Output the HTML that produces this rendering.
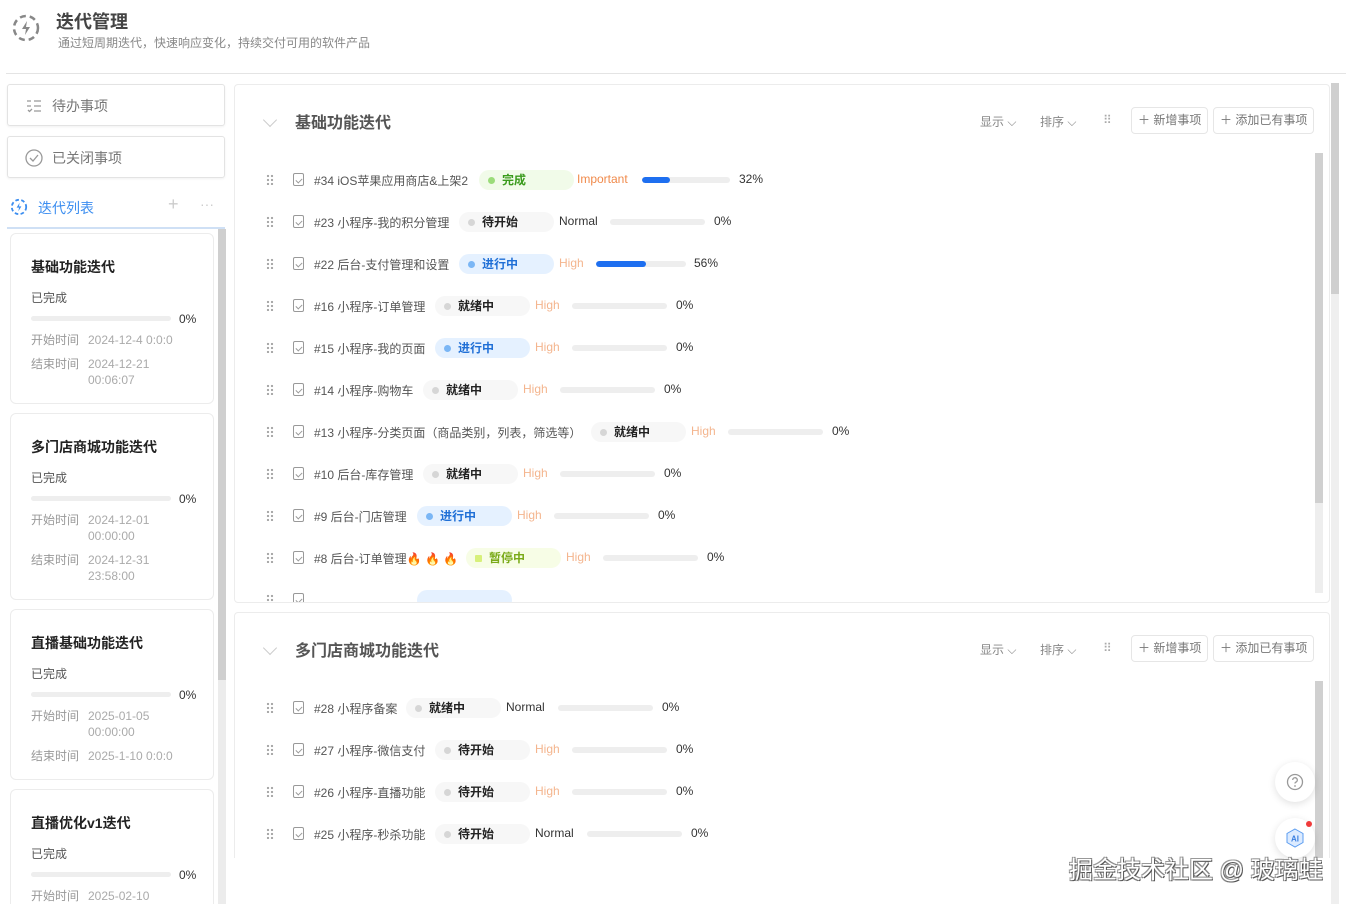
<!DOCTYPE html>
<html><head><meta charset="utf-8"><style>
*{margin:0;padding:0;box-sizing:border-box}
html,body{width:1354px;height:904px;overflow:hidden}
body{background:#fff;font-family:"Liberation Sans","Noto Sans CJK SC",sans-serif;color:#333;position:relative}
.a{position:absolute}
.btn{position:absolute;left:7px;width:218px;height:42px;border:1px solid #e3e3e3;border-radius:3px;box-shadow:0 1px 2px rgba(0,0,0,.06);font-size:14px;color:#777;}
.card{position:absolute;left:10px;width:204px;border:1px solid #ececec;border-radius:6px;background:#fff}
.card .t{position:absolute;left:20px;top:23px;font-size:14px;font-weight:bold;color:#222}
.card .s{position:absolute;left:20px;font-size:12px;color:#555}
.card .bar{position:absolute;left:20px;width:140px;height:5px;border-radius:3px;background:#eee}
.card .p{position:absolute;left:168px;font-size:12px;color:#333}
.card .l{position:absolute;left:20px;font-size:12px;color:#999;line-height:16px}
.card .v{position:absolute;left:77px;font-size:12px;color:#aaa;line-height:16px}
.panel{position:absolute;left:234px;width:1096px;border:1px solid #ececec;border-radius:4px;overflow:hidden;background:#fff}
.ph{position:absolute;top:24px;left:60px;font-size:16px;font-weight:bold;color:#555}
.chev{position:absolute;left:30px;top:30px;width:10px;height:10px;border-right:1.5px solid #ccc;border-bottom:1.5px solid #ccc;transform:rotate(45deg)}
.tool{position:absolute;top:28px;font-size:12px;color:#888}
.ob{position:absolute;top:22px;height:27px;border:1px solid #e6e6e6;border-radius:4px;font-size:12px;color:#777;line-height:25px;padding:0 6px}
.row{position:absolute;left:0;width:1060px;height:42px;font-size:12px}
.drag{position:absolute;left:31px;top:15px;width:8px;height:11px;background:radial-gradient(circle,#aaa 1.1px,transparent 1.3px) 0 0/4px 4px}
.ck{position:absolute;left:58px;top:14px;width:11px;height:13px;border:1.3px solid #999;border-radius:2px}
.ck:after{content:"";position:absolute;left:2.5px;top:3px;width:3px;height:5px;border-right:1.2px solid #999;border-bottom:1.2px solid #999;transform:rotate(45deg)}
.nm{position:absolute;left:79px;top:13px;color:#555;white-space:nowrap}
.pill{position:absolute;top:11px;width:95px;height:20px;border-radius:10px;font-size:12px;line-height:20px;font-weight:600}
.pill i{position:absolute;left:9px;top:7px;width:7px;height:7px;border-radius:50%}
.pill span{position:absolute;left:23px}
.g{background:#f1fbe9;color:#3a9b1c}.g i{background:#9bdc7a}
.w{background:#f7f7f7;color:#222}.w i{background:#d6d6d6}
.b{background:#e5f1ff;color:#1f6fd6}.b i{background:#7ab6f5}
.y{background:#f7fde6;color:#7aaa19}.y i{background:#d7f07a;border-radius:1px}
.pr{position:absolute;top:13px;color:#f4b58e}
.bar{position:absolute;top:18px;height:6px;border-radius:3px;background:#eee;overflow:hidden}
.bar b{display:block;height:6px;background:#1e6ff0;border-radius:3px}
.pc{position:absolute;top:13px;color:#333}
</style></head><body>
<svg class="a" style="left:11px;top:13px" width="30" height="30" viewBox="0 0 30 30"><circle cx="15" cy="15" r="12" fill="none" stroke="#888" stroke-width="2.5" stroke-dasharray="6 4"/><path d="M16 8l-5 8h4l-1 6 5-8h-4z" fill="#888"/></svg>
<div class="a" style="left:56px;top:8px;font-size:18px;font-weight:bold;color:#444">迭代管理</div>
<div class="a" style="left:58px;top:34px;font-size:12px;color:#888">通过短周期迭代，快速响应变化，持续交付可用的软件产品</div>
<div class="a" style="left:6px;top:73px;width:1340px;height:1px;background:#e4e4e4"></div>
<div class="btn" style="top:84px"><svg class="a" style="left:18px;top:14px" width="16" height="14"><path d="M1 2h4M1 7h4M2 11l1.5 1.5L6 10M8 2h7M8 7h7M8 12h7" stroke="#999" stroke-width="1.3" fill="none"/></svg><span class="a" style="left:44px;top:11px">待办事项</span></div>
<div class="btn" style="top:136px"><svg class="a" style="left:16px;top:11px" width="20" height="20"><circle cx="10" cy="10" r="8" stroke="#999" stroke-width="1.3" fill="none"/><path d="M6 10l3 3 5-6" stroke="#999" stroke-width="1.3" fill="none"/></svg><span class="a" style="left:44px;top:11px">已关闭事项</span></div>
<svg class="a" style="left:10px;top:198px" width="18" height="18" viewBox="0 0 30 30"><circle cx="15" cy="15" r="12" fill="none" stroke="#3c8ef0" stroke-width="3" stroke-dasharray="6 4"/><path d="M16 8l-5 8h4l-1 6 5-8h-4z" fill="#3c8ef0"/></svg>
<div class="a" style="left:38px;top:198px;font-size:14px;color:#3c8ef0">迭代列表</div>
<div class="a" style="left:168px;top:194px;font-size:18px;color:#ccc">+</div>
<div class="a" style="left:200px;top:196px;font-size:14px;color:#ccc">···</div>
<div class="a" style="left:7px;top:227px;width:218px;height:2px;background:#cfe0f5"></div>
<div class="a" style="left:218px;top:229px;width:8px;height:675px;background:#ececec"></div>
<div class="a" style="left:218px;top:229px;width:8px;height:451px;background:#cfcfcf"></div>

<div class="card" style="top:233px;height:171px"><div class="t">基础功能迭代</div><div class="s" style="top:55px">已完成</div><div class="bar" style="top:82px"></div><div class="p" style="top:78px">0%</div><div class="l" style="top:98px">开始时间</div><div class="v" style="top:98px">2024-12-4 0:0:0</div><div class="l" style="top:122px">结束时间</div><div class="v" style="top:122px">2024-12-21<br>00:06:07</div></div>
<div class="card" style="top:413px;height:187px"><div class="t">多门店商城功能迭代</div><div class="s" style="top:55px">已完成</div><div class="bar" style="top:82px"></div><div class="p" style="top:78px">0%</div><div class="l" style="top:98px">开始时间</div><div class="v" style="top:98px">2024-12-01<br>00:00:00</div><div class="l" style="top:138px">结束时间</div><div class="v" style="top:138px">2024-12-31<br>23:58:00</div></div>
<div class="card" style="top:609px;height:171px"><div class="t">直播基础功能迭代</div><div class="s" style="top:55px">已完成</div><div class="bar" style="top:82px"></div><div class="p" style="top:78px">0%</div><div class="l" style="top:98px">开始时间</div><div class="v" style="top:98px">2025-01-05<br>00:00:00</div><div class="l" style="top:138px">结束时间</div><div class="v" style="top:138px">2025-1-10 0:0:0</div></div>
<div class="card" style="top:789px;height:115px;border-bottom:none;border-radius:6px 6px 0 0"><div class="t">直播优化v1迭代</div><div class="s" style="top:55px">已完成</div><div class="bar" style="top:82px"></div><div class="p" style="top:78px">0%</div><div class="l" style="top:98px">开始时间</div><div class="v" style="top:98px">2025-02-10</div></div>

<div class="a" style="left:1331px;top:83px;width:8px;height:821px;background:#efefef"></div>
<div class="a" style="left:1331px;top:83px;width:8px;height:211px;background:#cfcfcf"></div>

<div class="panel" style="top:84px;height:519px">
<div class="chev"></div><div class="ph">基础功能迭代</div>
<div class="tool" style="left:745px">显示 ⌵</div><div class="tool" style="left:805px">排序 ⌵</div>
<div class="tool" style="left:868px;color:#aaa">⠿</div>
<div class="ob" style="left:896px">＋ 新增事项</div><div class="ob" style="left:978px">＋ 添加已有事项</div>
<div class="a" style="left:1080px;top:68px;width:8px;height:440px;background:#eee"></div>
<div class="a" style="left:1080px;top:68px;width:8px;height:350px;background:#d0d0d0"></div>
<div class="row" style="top:74px"><div class="drag"></div><div class="ck"></div><div class="nm">#34 iOS苹果应用商店&amp;上架2</div><div class="pill g" style="left:244px"><i></i><span>完成</span></div><div class="pr" style="left:342px;color:#f08a4b">Important</div><div class="bar" style="left:407px;width:88px"><b style="width:28px"></b></div><div class="pc" style="left:504px">32%</div></div>
<div class="row" style="top:116px"><div class="drag"></div><div class="ck"></div><div class="nm">#23 小程序-我的积分管理</div><div class="pill w" style="left:224px"><i></i><span>待开始</span></div><div class="pr" style="left:324px;color:#333">Normal</div><div class="bar" style="left:375px;width:95px"></div><div class="pc" style="left:479px">0%</div></div>
<div class="row" style="top:158px"><div class="drag"></div><div class="ck"></div><div class="nm">#22 后台-支付管理和设置</div><div class="pill b" style="left:224px"><i></i><span>进行中</span></div><div class="pr" style="left:324px">High</div><div class="bar" style="left:361px;width:90px"><b style="width:50px"></b></div><div class="pc" style="left:459px">56%</div></div>
<div class="row" style="top:200px"><div class="drag"></div><div class="ck"></div><div class="nm">#16 小程序-订单管理</div><div class="pill w" style="left:200px"><i></i><span>就绪中</span></div><div class="pr" style="left:300px">High</div><div class="bar" style="left:337px;width:95px"></div><div class="pc" style="left:441px">0%</div></div>
<div class="row" style="top:242px"><div class="drag"></div><div class="ck"></div><div class="nm">#15 小程序-我的页面</div><div class="pill b" style="left:200px"><i></i><span>进行中</span></div><div class="pr" style="left:300px">High</div><div class="bar" style="left:337px;width:95px"></div><div class="pc" style="left:441px">0%</div></div>
<div class="row" style="top:284px"><div class="drag"></div><div class="ck"></div><div class="nm">#14 小程序-购物车</div><div class="pill w" style="left:188px"><i></i><span>就绪中</span></div><div class="pr" style="left:288px">High</div><div class="bar" style="left:325px;width:95px"></div><div class="pc" style="left:429px">0%</div></div>
<div class="row" style="top:326px"><div class="drag"></div><div class="ck"></div><div class="nm">#13 小程序-分类页面（商品类别，列表，筛选等）</div><div class="pill w" style="left:356px"><i></i><span>就绪中</span></div><div class="pr" style="left:456px">High</div><div class="bar" style="left:493px;width:95px"></div><div class="pc" style="left:597px">0%</div></div>
<div class="row" style="top:368px"><div class="drag"></div><div class="ck"></div><div class="nm">#10 后台-库存管理</div><div class="pill w" style="left:188px"><i></i><span>就绪中</span></div><div class="pr" style="left:288px">High</div><div class="bar" style="left:325px;width:95px"></div><div class="pc" style="left:429px">0%</div></div>
<div class="row" style="top:410px"><div class="drag"></div><div class="ck"></div><div class="nm">#9 后台-门店管理</div><div class="pill b" style="left:182px"><i></i><span>进行中</span></div><div class="pr" style="left:282px">High</div><div class="bar" style="left:319px;width:95px"></div><div class="pc" style="left:423px">0%</div></div>
<div class="row" style="top:452px"><div class="drag"></div><div class="ck"></div><div class="nm">#8 后台-订单管理<span style="color:#f07a2a">🔥 🔥 🔥</span></div><div class="pill y" style="left:231px"><i></i><span>暂停中</span></div><div class="pr" style="left:331px">High</div><div class="bar" style="left:368px;width:95px"></div><div class="pc" style="left:472px">0%</div></div>
<div class="row" style="top:494px"><div class="drag"></div><div class="ck"></div><div class="pill b" style="left:182px"></div></div>
</div>

<div class="panel" style="top:612px;height:300px">
<div class="chev"></div><div class="ph">多门店商城功能迭代</div>
<div class="tool" style="left:745px">显示 ⌵</div><div class="tool" style="left:805px">排序 ⌵</div>
<div class="tool" style="left:868px;color:#aaa">⠿</div>
<div class="ob" style="left:896px">＋ 新增事项</div><div class="ob" style="left:978px">＋ 添加已有事项</div>
<div class="a" style="left:1080px;top:68px;width:8px;height:240px;background:#d0d0d0"></div>
<div class="row" style="top:74px"><div class="drag"></div><div class="ck"></div><div class="nm">#28 小程序备案</div><div class="pill w" style="left:171px"><i></i><span>就绪中</span></div><div class="pr" style="left:271px;color:#333">Normal</div><div class="bar" style="left:323px;width:95px"></div><div class="pc" style="left:427px">0%</div></div>
<div class="row" style="top:116px"><div class="drag"></div><div class="ck"></div><div class="nm">#27 小程序-微信支付</div><div class="pill w" style="left:200px"><i></i><span>待开始</span></div><div class="pr" style="left:300px">High</div><div class="bar" style="left:337px;width:95px"></div><div class="pc" style="left:441px">0%</div></div>
<div class="row" style="top:158px"><div class="drag"></div><div class="ck"></div><div class="nm">#26 小程序-直播功能</div><div class="pill w" style="left:200px"><i></i><span>待开始</span></div><div class="pr" style="left:300px">High</div><div class="bar" style="left:337px;width:95px"></div><div class="pc" style="left:441px">0%</div></div>
<div class="row" style="top:200px"><div class="drag"></div><div class="ck"></div><div class="nm">#25 小程序-秒杀功能</div><div class="pill w" style="left:200px"><i></i><span>待开始</span></div><div class="pr" style="left:300px;color:#333">Normal</div><div class="bar" style="left:352px;width:95px"></div><div class="pc" style="left:456px">0%</div></div>
</div>
<div class="a" style="left:234px;top:858px;width:1096px;height:46px;background:#fff"></div>

<div class="a" style="left:1275px;top:762px;width:40px;height:40px;border-radius:50%;background:#fff;box-shadow:0 2px 8px rgba(0,0,0,.12)"><svg class="a" style="left:11px;top:11px" width="18" height="18"><circle cx="9" cy="9" r="7.5" stroke="#999" stroke-width="1.3" fill="none"/><path d="M6.7 7a2.3 2.3 0 1 1 3 2.2c-.6.3-.7.7-.7 1.3" stroke="#999" stroke-width="1.3" fill="none"/><circle cx="9" cy="13" r=".9" fill="#999"/></svg></div>
<div class="a" style="left:1275px;top:818px;width:40px;height:40px;border-radius:50%;background:#fff;box-shadow:0 2px 8px rgba(0,0,0,.12)"><svg class="a" style="left:10px;top:10px" width="20" height="20"><path d="M10 1l8 4.5v9L10 19l-8-4.5v-9z" fill="#dcebff" stroke="#5b9cf0"/><text x="10" y="13.5" font-size="8" text-anchor="middle" fill="#3a7fe0" font-family="Liberation Sans" font-weight="bold">AI</text></svg></div>
<div class="a" style="left:1306px;top:821px;width:6px;height:6px;border-radius:50%;background:#f03a3a"></div>
<div class="a" style="left:1069px;top:850px;font-size:24px;color:#fff;text-shadow:1px 1px 0 #555,-1px -1px 0 #999,1px -1px 0 #888,-1px 1px 0 #888;white-space:nowrap">掘金技术社区 @ 玻璃蛙</div>
</body></html>
